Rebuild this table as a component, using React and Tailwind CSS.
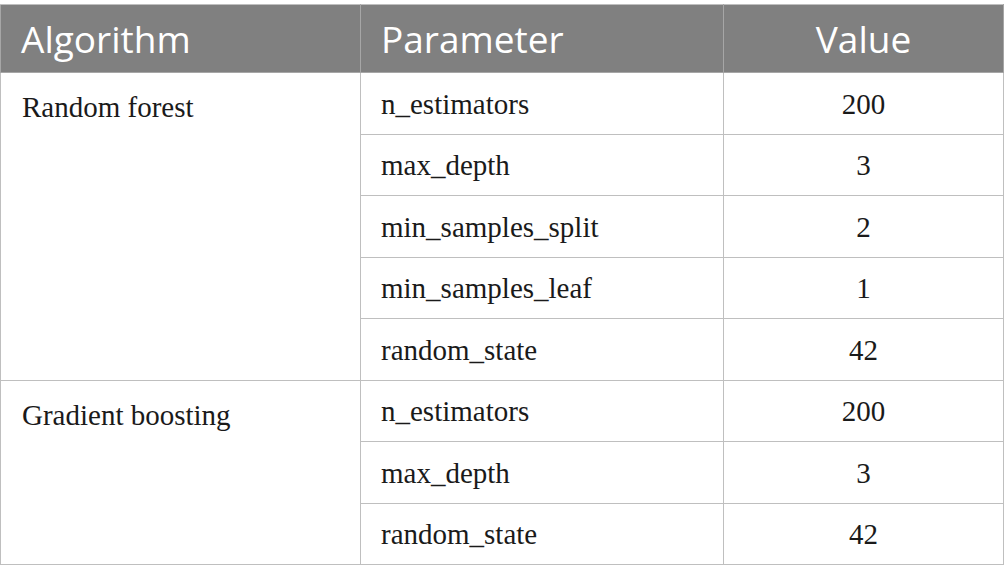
import React from 'react';

const rows = [
    { algo: 'Random forest', params: [['n_estimators', '200'], ['max_depth', '3'], ['min_samples_split', '2'], ['min_samples_leaf', '1'], ['random_state', '42']] },
    { algo: 'Gradient boosting', params: [['n_estimators', '200'], ['max_depth', '3'], ['random_state', '42']] },
];

export default function App() {
    const cell = "border border-[#bfbfbf] h-[61.5px] p-0";
    return (
        <div className="bg-white w-[1005px] h-[582px] pt-[4px]">
            <table className="w-[1004px] table-fixed border-collapse text-[#1a1a1a]" style={{ fontFamily: '"Liberation Serif", serif' }}>
                <colgroup>
                    <col className="w-[360px]" />
                    <col className="w-[363px]" />
                    <col />
                </colgroup>
                <thead>
                    <tr className="bg-[#808080] text-white text-[37px] h-[68px]" style={{ fontFamily: '"Open Sans", sans-serif' }}>
                        <th className="border border-[#a6a6a6] border-t-[#bfbfbf] font-normal text-left pl-[20px]">Algorithm</th>
                        <th className="border border-[#a6a6a6] border-t-[#bfbfbf] font-normal text-left pl-[20px]">Parameter</th>
                        <th className="border border-[#a6a6a6] border-t-[#bfbfbf] font-normal text-center">Value</th>
                    </tr>
                </thead>
                <tbody className="text-[29px]">
                    {rows.map((group) =>
                        group.params.map(([name, value], i) => (
                            <tr key={group.algo + name}>
                                {i === 0 && (
                                    <td rowSpan={group.params.length} className={cell + " align-top pl-[21px] pt-[13px]"}>
                                        {group.algo}
                                    </td>
                                )}
                                <td className={cell + " pl-[20px] pt-[2px]"}>{name}</td>
                                <td className={cell + " text-center pt-[2px]"}>{value}</td>
                            </tr>
                        ))
                    )}
                </tbody>
            </table>
        </div>
    );
}
